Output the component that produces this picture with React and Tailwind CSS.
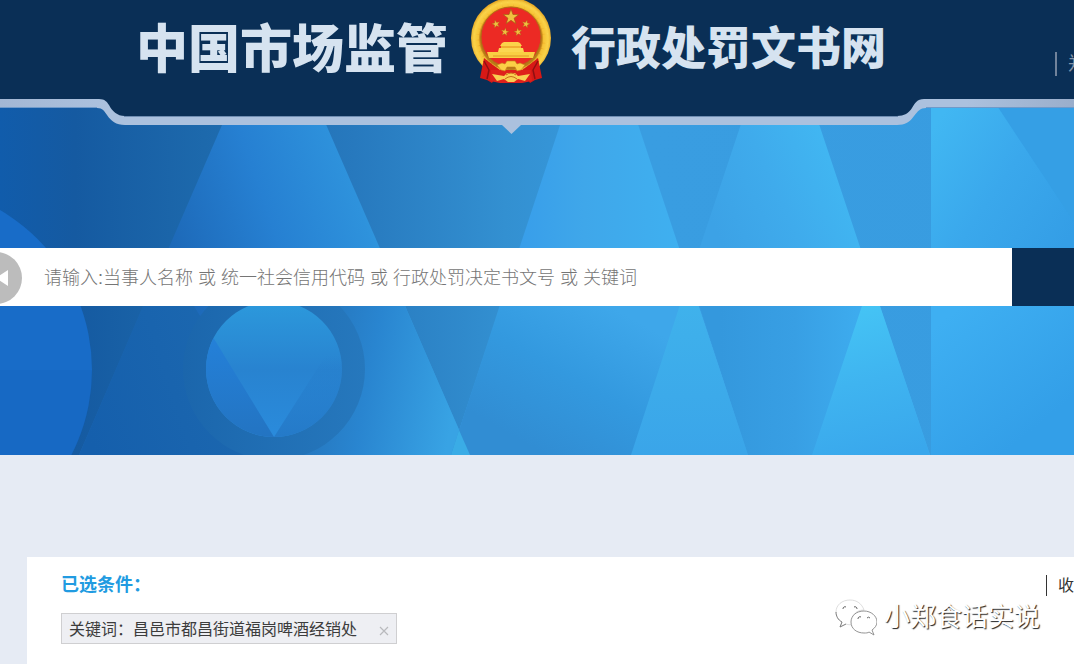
const HeroBackdrop = () => (
  <svg
    className="absolute inset-0 h-full w-full"
    viewBox="0 0 1074 455"
    preserveAspectRatio="xMidYMid slice"
    aria-hidden="true"
  >
    <defs>
      <linearGradient id="base" gradientUnits="userSpaceOnUse" x1="0" y1="0" x2="1074" y2="0">
        <stop offset="0" stopColor="#115cab" />
        <stop offset="0.07" stopColor="#155aa1" />
        <stop offset="0.19" stopColor="#1d69ac" />
        <stop offset="0.33" stopColor="#2779be" />
        <stop offset="0.47" stopColor="#3390d1" />
        <stop offset="0.6" stopColor="#399de1" />
        <stop offset="1" stopColor="#389ce0" />
      </linearGradient>
      <linearGradient id="peakA" gradientUnits="userSpaceOnUse" x1="190" y1="300" x2="430" y2="220">
        <stop offset="0" stopColor="#1d69b8" />
        <stop offset="0.4" stopColor="#2680d2" />
        <stop offset="0.75" stopColor="#2e92dc" />
        <stop offset="1" stopColor="#3aace6" />
      </linearGradient>
      <linearGradient id="peakABottom" gradientUnits="userSpaceOnUse" x1="290" y1="400" x2="450" y2="430">
        <stop offset="0" stopColor="#2472b8" />
        <stop offset="0.45" stopColor="#2985d0" />
        <stop offset="1" stopColor="#38a3e4" />
      </linearGradient>
      <linearGradient id="shade" gradientUnits="userSpaceOnUse" x1="90" y1="440" x2="270" y2="380">
        <stop offset="0" stopColor="#155fac" />
        <stop offset="1" stopColor="#1d69b0" />
      </linearGradient>
      <linearGradient id="ring" gradientUnits="userSpaceOnUse" x1="183" y1="0" x2="365" y2="0">
        <stop offset="0" stopColor="#1b66ac" />
        <stop offset="1" stopColor="#2678bd" />
      </linearGradient>
      <linearGradient id="disc" gradientUnits="userSpaceOnUse" x1="274" y1="302" x2="274" y2="437">
        <stop offset="0" stopColor="#2c99dc" />
        <stop offset="0.5" stopColor="#2883d0" />
        <stop offset="1" stopColor="#2a8bdc" />
      </linearGradient>
      <linearGradient id="discLeft" gradientUnits="userSpaceOnUse" x1="0" y1="341" x2="0" y2="437">
        <stop offset="0" stopColor="#2480d8" />
        <stop offset="1" stopColor="#2374c2" />
      </linearGradient>
      <linearGradient id="discRight" gradientUnits="userSpaceOnUse" x1="0" y1="355" x2="0" y2="437">
        <stop offset="0" stopColor="#2478c6" stopOpacity="0" />
        <stop offset="1" stopColor="#2478c6" stopOpacity="0.9" />
      </linearGradient>
      <linearGradient id="peakB" gradientUnits="userSpaceOnUse" x1="520" y1="0" x2="680" y2="0">
        <stop offset="0" stopColor="#389eea" />
        <stop offset="0.4" stopColor="#3fa7ea" />
        <stop offset="1" stopColor="#3fb0f0" />
      </linearGradient>
      <linearGradient id="peakBLow" gradientUnits="userSpaceOnUse" x1="520" y1="440" x2="600" y2="300">
        <stop offset="0" stopColor="#318dd3" />
        <stop offset="0.5" stopColor="#3399df" />
        <stop offset="1" stopColor="#3ea7ea" />
      </linearGradient>
      <linearGradient id="peakC" gradientUnits="userSpaceOnUse" x1="720" y1="240" x2="850" y2="180">
        <stop offset="0" stopColor="#3ca2e6" />
        <stop offset="0.5" stopColor="#3fabec" />
        <stop offset="1" stopColor="#41b7f2" />
      </linearGradient>
      <linearGradient id="peakCLow" gradientUnits="userSpaceOnUse" x1="720" y1="0" x2="870" y2="0">
        <stop offset="0" stopColor="#3498dd" />
        <stop offset="0.5" stopColor="#389fe4" />
        <stop offset="1" stopColor="#3eaef0" />
      </linearGradient>
      <linearGradient id="overlapBC" gradientUnits="userSpaceOnUse" x1="0" y1="277" x2="0" y2="455">
        <stop offset="0" stopColor="#40b4ec" />
        <stop offset="1" stopColor="#3aa5e9" />
      </linearGradient>
      <linearGradient id="peakD" gradientUnits="userSpaceOnUse" x1="860" y1="300" x2="900" y2="455">
        <stop offset="0" stopColor="#45c5f5" />
        <stop offset="0.5" stopColor="#3fb4f0" />
        <stop offset="1" stopColor="#39a7ec" />
      </linearGradient>
      <linearGradient id="side" gradientUnits="userSpaceOnUse" x1="931" y1="130" x2="1074" y2="230">
        <stop offset="0" stopColor="#41b7f2" />
        <stop offset="0.5" stopColor="#3aa8ec" />
        <stop offset="1" stopColor="#349ee6" />
      </linearGradient>
      <linearGradient id="sideLow" gradientUnits="userSpaceOnUse" x1="931" y1="330" x2="1020" y2="440">
        <stop offset="0" stopColor="#3eaff2" />
        <stop offset="1" stopColor="#339fe8" />
      </linearGradient>
      <clipPath id="discClip">
        <circle cx="274" cy="369" r="68" />
      </clipPath>
    </defs>

    <rect width="1074" height="455" fill="url(#base)" />

    <polygon points="274,5 470,455 79,455" fill="url(#peakA)" />
    <polygon points="274,306 405,306 470,455 274,455" fill="url(#peakABottom)" />
    <polygon points="164,257 274,437 290,455 79,455" fill="url(#shade)" />
    <circle cx="-93" cy="370" r="185" fill="#186cc8" />
    <path d="M0 370H92A185 185 0 0 1 72 455H0Z" fill="#155fb6" opacity="0.25" />

    <circle cx="274" cy="369" r="91" fill="url(#ring)" />
    <g clipPath="url(#discClip)">
      <rect x="206" y="301" width="136" height="136" fill="url(#disc)" />
      <polygon points="194,306 274,437 194,437" fill="url(#discLeft)" />
      <polygon points="274,437 326,355 342,355 342,437" fill="url(#discRight)" />
    </g>

    <polygon points="599,7 748,455 451,455" fill="url(#peakB)" />
    <polygon points="509,277 689,277 748,455 451,455" fill="url(#peakBLow)" />
    <polygon points="459,430 470,455 451,455" fill="#3aace6" />
    <polygon points="780,7 870,277 690,277" fill="url(#peakC)" />
    <polygon points="690,277 870,277 930,455 748,455" fill="url(#peakCLow)" />
    <polygon points="689,277 748,455 631,455" fill="url(#overlapBC)" />
    <polygon points="871,279 930,455 812,455" fill="url(#peakD)" />

    <rect x="931" width="143" height="277" fill="url(#side)" />
    <rect x="931" y="277" width="143" height="178" fill="url(#sideLow)" />
    <polygon points="927,0 1074,0 1074,222" fill="#359fe5" />
  </svg>
);

const HeaderShape = () => (
  <svg
    className="absolute inset-x-0 top-0 h-[136px] w-full"
    viewBox="0 0 1074 136"
    preserveAspectRatio="none"
    aria-hidden="true"
  >
    <defs>
      <linearGradient id="band" x1="0" x2="1" y1="0" y2="0">
        <stop offset="0" stopColor="#a3b7d4" />
        <stop offset="0.1" stopColor="#abc1de" />
        <stop offset="0.9" stopColor="#abc1de" />
        <stop offset="1" stopColor="#9aaecb" />
      </linearGradient>
    </defs>
    <path
      d="M0 0H1074V108H926C920 108 918 111 914 116C910 122 905 125 897 125H521L511.500 134L502 125H125C116 125 111 121 107 115C104 111 103 108 97 108H0Z"
      fill="url(#band)"
    />
    <path d="M0 107.500H97M926 107.500H1074" stroke="#6f9aca" />
    <path
      d="M0 0H1074V99H924C917 99 915 103 912 108C909 113 904 116 897 116H125C117 116 112 111 109 105C107 102 105 99 99 99H0Z"
      fill="#0a2f56"
    />
    <path d="M124 116.500H898" stroke="#6f8db2" />
  </svg>
);

const STAR = 'M0 -7L1.700 -2.200L6.800 -2.100L2.700 1L4.200 5.800L0 2.900L-4.200 5.800L-2.700 1L-6.800 -2.100L-1.700 -2.200Z';

const Emblem = () => (
  <svg className="h-[86px] w-20 shrink-0" viewBox="0 0 80 86" role="img" aria-label="国徽">
    <defs>
      <radialGradient id="gold" gradientUnits="userSpaceOnUse" cx="40" cy="40" r="41">
        <stop offset="0.74" stopColor="#b87a18" />
        <stop offset="0.8" stopColor="#f3b52a" />
        <stop offset="0.9" stopColor="#fbd751" />
        <stop offset="1" stopColor="#e2a01e" />
      </radialGradient>
    </defs>
    <ellipse cx="40" cy="39" rx="40" ry="40" fill="url(#gold)" />
    <ellipse
      cx="40" cy="39" rx="35" ry="35"
      fill="none" stroke="#f9cd40" strokeWidth="6" strokeDasharray="5 1" opacity="0.6"
    />
    <circle cx="40" cy="38" r="30" fill="#ec2a24" stroke="#b56a16" strokeWidth="1" />
    <g fill="#f0c040" stroke="#a85a12" strokeWidth="0.600">
      <path d={STAR} transform="translate(40 18) scale(1.150)" />
      <path d={STAR} transform="translate(25 25) scale(0.600) rotate(-15)" />
      <path d={STAR} transform="translate(55 25) scale(0.600) rotate(15)" />
      <path d={STAR} transform="translate(34 33) scale(0.600) rotate(10)" />
      <path d={STAR} transform="translate(47 33) scale(0.600) rotate(-10)" />
    </g>
    {/* Gate tower */}
    <path d="M31 44L33 43H47L49 44L51 47H29Z" fill="#fbd34a" />
    <path d="M30 47H50V49H30Z" fill="#f1ae31" />
    <path d="M28 49H52L53 53H27Z" fill="#fbd751" />
    <path d="M16 53H64L62 59H18Z" fill="#f9cf43" />
    <path d="M22 57H58" stroke="#db8c20" strokeWidth="0.800" />
    {/* Ribbon and gear */}
    <path d="M13 59L22 66L29 71L21 84L16 81L9 79Z" fill="#d71916" />
    <path d="M67 59L58 66L51 71L59 84L64 81L71 79Z" fill="#d71916" />
    <path d="M20 71H60L61 82L51 84H29L19 82Z" fill="#df211b" />
    <path d="M13 62L18 71L16 80M67 62L62 71L64 80" fill="none" stroke="#8f1012" strokeWidth="1.500" />
    <path
      d="M26 66L31 64L34 65L36 62H44L46 65L49 64L54 66L50 71L46 72L44 68H36L34 72L30 71Z"
      fill="#fbd046" stroke="#c88018" strokeWidth="0.600"
    />
    <path d="M21 75L33 77L36 74H44L47 77L59 75L54 82L47 80L43 83H37L33 80L26 82Z" fill="#f9cf52" />
    <path d="M35 76Q40 72 45 76M34 80Q40 75 46 80" fill="none" stroke="#c66b18" />
  </svg>
);

const SiteHeader = () => (
  <header className="relative h-[136px] overflow-hidden">
    <HeaderShape />
    <div className="relative flex h-[99px] items-center pl-[136px] text-[#d6e3f0]">
      <h1 className="flex shrink-0 items-center whitespace-nowrap font-black leading-none">
        <span className="text-[52px]">中国市场监管</span>
        <span className="-mt-4 mr-5 ml-[23px]">
          <Emblem />
        </span>
        <span className="text-[45px]">行政处罚文书网</span>
      </h1>
      <div className="mt-7 ml-auto h-6 w-[19px] shrink-0 overflow-hidden whitespace-nowrap border-l-2 border-[#71839b] pl-[11px] text-lg leading-6 text-[#8494a8]">
        郑
      </div>
    </div>
  </header>
);

const SearchBar = () => (
  <form className="relative mt-28 flex h-[58px]" onSubmit={(e) => e.preventDefault()}>
    <input
      type="text"
      aria-label="搜索"
      placeholder="请输入:当事人名称 或 统一社会信用代码 或 行政处罚决定书文号 或 关键词"
      className="min-w-0 flex-1 bg-white pt-[2px] pl-11 text-lg font-light text-gray-700 outline-none placeholder:text-[#757575]"
    />
    <button type="submit" aria-label="查询" className="w-[62px] shrink-0 bg-[#0a2f56]" />
    <button
      type="button"
      aria-label="上一页"
      className="absolute top-1 -left-[30px] h-[52px] w-[52px] rounded-full bg-[#bcbcbc]"
    >
      <svg viewBox="0 0 52 52" className="h-full w-full">
        <polygon points="26,26 38,18 38,34" fill="#ffffff" />
      </svg>
    </button>
  </form>
);

const FilterTag = ({ label, value }) => (
  <div className="flex h-[31px] w-[336px] items-center justify-between border border-[#cfcfd1] bg-[#eeeff3] px-[7px] pt-[2px] text-base text-[#3c3c3c]">
    <span className="whitespace-nowrap">{label}：{value}</span>
    <button type="button" aria-label="移除" className="mt-[2px]">
      <svg viewBox="0 0 10 10" className="h-[10px] w-[10px]">
        <path d="M1 1L9 9M9 1L1 9" stroke="#b9babd" strokeWidth="1.200" />
      </svg>
    </button>
  </div>
);

const Watermark = () => (
  <div className="absolute right-[34px] bottom-[28px] flex items-center gap-[7px]">
    <svg viewBox="0 0 42 38" className="h-[38px] w-[42px]" aria-hidden="true">
      <g fill="#ffffff" strokeLinejoin="round">
        <path
          d="M15 2C7 2 1 7 1 14C1 18 3 22 7 24L5 29L11 26C13 27 17 27 19 26C15 19 20 12 29 12C27 6 22 2 15 2Z"
          stroke="#d0d0d0" strokeWidth="0.700"
        />
        <path d="M1 14C1 18 3 22 7 24L5 29L11 26" fill="none" stroke="#777777" strokeWidth="0.900" />
        <path
          d="M29 13C21 13 16 18 16 24C16 31 22 35 29 35C31 35 33 35 34 34L39 37L37 32C40 30 42 27 42 24C42 18 36 13 29 13Z"
          stroke="#888888" strokeWidth="0.900"
        />
        <path
          d="M8 11A2 2 0 0 1 11 9M19 9A2 2 0 0 1 22 11M23 21A2 2 0 0 1 26 19M32 20A2 2 0 0 1 35 20"
          fill="none" stroke="#666666"
        />
      </g>
    </svg>
    <span className="whitespace-nowrap text-[26px] leading-8 text-white [text-shadow:1px_1px_1px_#222222]">
      小郑食话实说
    </span>
  </div>
);

export default function App() {
  return (
    <div className="relative flex min-h-screen flex-col overflow-x-hidden bg-[#e6ebf4] font-['Liberation_Sans','Noto_Sans_CJK_SC',sans-serif]">
      <section className="relative overflow-hidden pb-[149px]">
        <HeroBackdrop />
        <SiteHeader />
        <SearchBar />
      </section>

      <main className="mt-[102px] ml-[27px] flex-1 bg-white pt-4 pb-5 pl-[34px]">
        <div className="mb-4 flex items-center justify-between">
          <h2 className="text-lg leading-6 font-bold text-[#219be1]">已选条件：</h2>
          <button type="button" className="h-[21px] border-l border-[#333333] pl-[11px] text-base leading-[21px] text-[#333333]">
            收
          </button>
        </div>
        <FilterTag label="关键词" value="昌邑市都昌街道福岗啤酒经销处" />
      </main>

      <Watermark />
    </div>
  );
}
